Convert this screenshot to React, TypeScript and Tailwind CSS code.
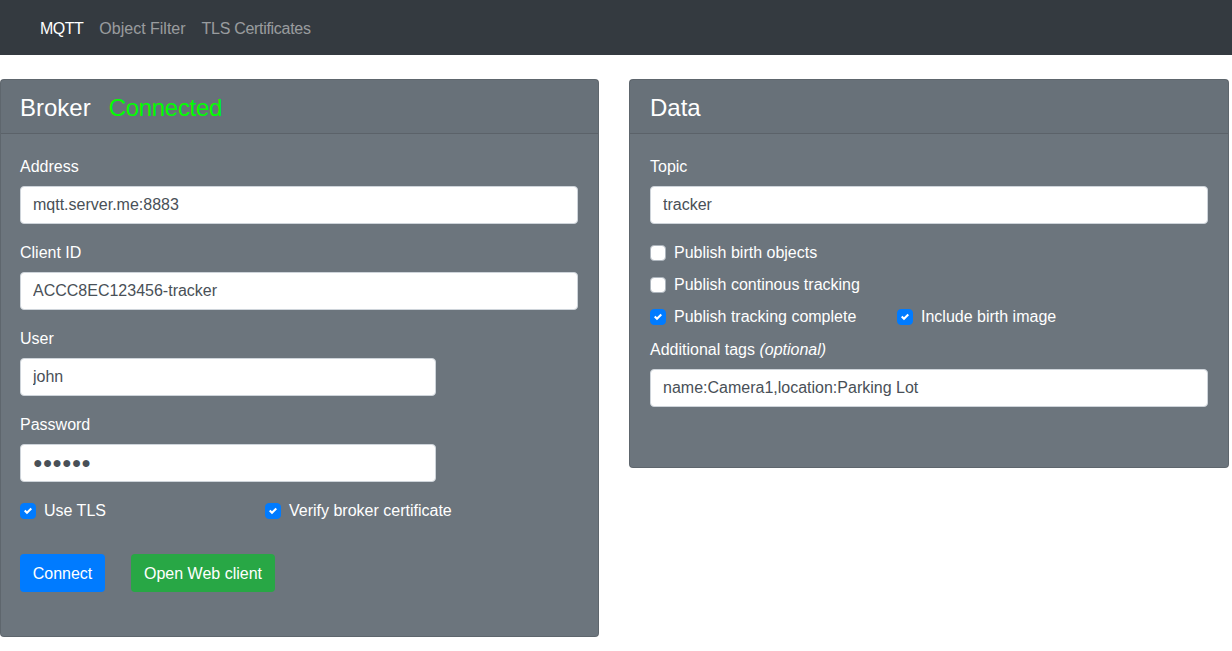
import React from "react";

function Check({ checked, label }: { checked?: boolean; label: string }) {
  return (
    <label className="flex h-6 items-center pt-px">
      <span
        className={
          "mr-2 flex h-4 w-4 items-center justify-center rounded-[4px] border " +
          (checked ? "border-[#007bff] bg-[#007bff]" : "border-[#adb5bd] bg-white")
        }
      >
        {checked && (
          <svg viewBox="0 0 8 8" className="h-2 w-2">
            <path fill="#fff" d="M6.564.75l-3.59 3.612-1.538-1.55L0 4.26 2.974 7.25 8 2.193z" />
          </svg>
        )}
      </span>
      <span>{label}</span>
    </label>
  );
}

function Field({
  label,
  value,
  narrow,
}: {
  label: React.ReactNode;
  value: string;
  narrow?: boolean;
}) {
  return (
    <div className="mb-4">
      <label className="mb-[7px] block h-[25px] pt-px leading-6">{label}</label>
      <input
        type="text"
        defaultValue={value}
        className={
          "block h-[38px] rounded-[4px] border border-[#ced4da] bg-white px-3 text-base text-[#495057] outline-none " +
          (narrow ? "w-[416px]" : "w-full")
        }
      />
    </div>
  );
}

export default function App() {
  return (
    <div className="min-h-[651px] bg-white font-['Liberation_Sans',Arial,sans-serif] text-base leading-6">
      {/* Navbar */}
      <nav className="flex h-[55px] items-center bg-[#343a40] pl-8 pt-[2px]">
        <a className="px-2 tracking-[-0.5px] text-white">MQTT</a>
        <a className="px-2 text-white/50">Object Filter</a>
        <a className="px-2 tracking-[-0.3px] text-white/50">TLS Certificates</a>
      </nav>

      <div className="mt-6 flex items-start gap-[30px]">
        {/* Broker card */}
        <div className="w-[599px] rounded-[4px] border border-black/[0.125] bg-[#6c757d] text-white">
          <div className="flex h-[54px] items-center border-b border-black/[0.125] bg-black/[0.03] pl-[19px] pr-5 pt-[2px]">
            <h4 className="text-[24px] leading-[29px]">
              Broker<span className="ml-[18px] tracking-[-0.3px] text-[#00ff00]">Connected</span>
            </h4>
          </div>
          <div className="pb-[44px] pl-[19px] pr-5 pt-5">
            <Field label="Address" value="mqtt.server.me:8883" />
            <Field label="Client ID" value="ACCC8EC123456-tracker" />
            <Field label="User" value="john" narrow />
            <Field label="Password" value="●●●●●●" narrow />
            <div className="flex">
              <div className="w-[245px]">
                <Check checked label="Use TLS" />
              </div>
              <Check checked label="Verify broker certificate" />
            </div>
            <div className="mt-8 flex gap-[26px]">
              <button className="flex h-[38px] w-[85px] items-center justify-center rounded-[4px] bg-[#007bff] pt-px text-white">
                Connect
              </button>
              <button className="flex h-[38px] w-[144px] items-center justify-center rounded-[4px] bg-[#28a745] pt-px text-white">
                Open Web client
              </button>
            </div>
          </div>
        </div>

        {/* Data card */}
        <div className="w-[600px] rounded-[4px] border border-black/[0.125] bg-[#6c757d] text-white">
          <div className="flex h-[54px] items-center border-b border-black/[0.125] bg-black/[0.03] px-5 pt-[2px]">
            <h4 className="text-[24px] leading-[29px]">Data</h4>
          </div>
          <div className="px-5 pb-[44px] pt-5">
            <Field label="Topic" value="tracker" />
            <div className="mb-2">
              <Check label="Publish birth objects" />
            </div>
            <div className="mb-2">
              <Check label="Publish continous tracking" />
            </div>
            <div className="mb-[9px] flex">
              <div className="w-[247px]">
                <Check checked label="Publish tracking complete" />
              </div>
              <Check checked label="Include birth image" />
            </div>
            <Field
              label={
                <>
                  Additional tags <em>(optional)</em>
                </>
              }
              value="name:Camera1,location:Parking Lot"
            />
          </div>
        </div>
      </div>
    </div>
  );
}
